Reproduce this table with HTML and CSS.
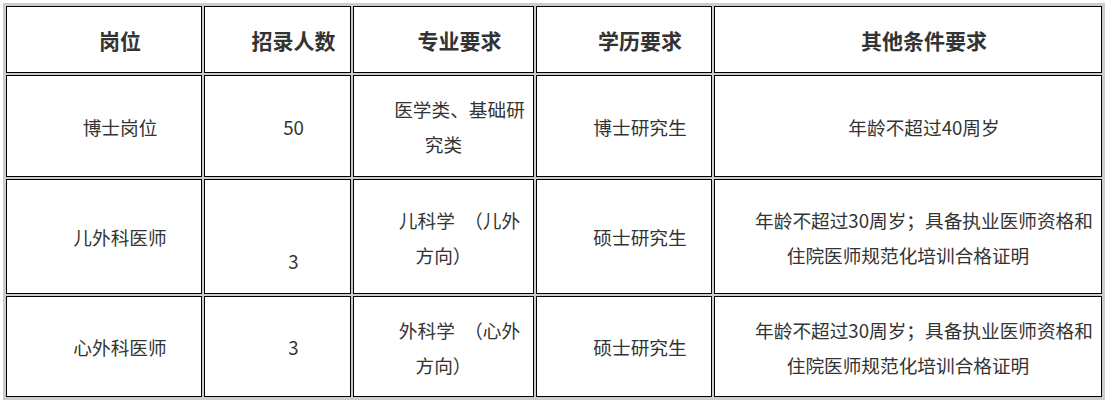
FILE: index.html
```html
<!DOCTYPE html>
<html lang="zh-CN">
<head>
<meta charset="utf-8">
<title>招聘岗位</title>
<link rel="stylesheet" href="styles.css">
</head>
<body>
<table class="jobs">
  <colgroup>
    <col class="c1"><col class="c2"><col class="c3"><col class="c4"><col class="c5">
  </colgroup>
  <tr class="r-head">
    <th>岗位</th>
    <th>招录人数</th>
    <th>专业要求</th>
    <th>学历要求</th>
    <th>其他条件要求</th>
  </tr>
  <tr class="r-1">
    <td>博士岗位</td>
    <td>50</td>
    <td>医学类、基础研<br>究类</td>
    <td>博士研究生</td>
    <td>年龄不超过40周岁</td>
  </tr>
  <tr class="r-2">
    <td>儿外科医师</td>
    <td><div class="low">3</div></td>
    <td>儿科学　（儿外<br>方向）</td>
    <td>硕士研究生</td>
    <td>年龄不超过30周岁；具备执业医师资格和<br>住院医师规范化培训合格证明</td>
  </tr>
  <tr class="r-3">
    <td>心外科医师</td>
    <td>3</td>
    <td>外科学　（心外<br>方向）</td>
    <td>硕士研究生</td>
    <td>年龄不超过30周岁；具备执业医师资格和<br>住院医师规范化培训合格证明</td>
  </tr>
</table>
</body>
</html>
```

FILE: styles.css
```css
html, body {
  background: #ffffff;
}
body {
  margin: 3px;
  font-family: "Noto Sans CJK SC", "Microsoft YaHei", sans-serif;
  color: #333333;
}
.jobs {
  table-layout: fixed;
  width: 1102px;
  border-collapse: separate;
  border-spacing: 2px;
  border: 1px solid #cccccc;
  background: #cccccc;
}
.c1 { width: 196px; }
.c2 { width: 147px; }
.c3 { width: 181px; }
.c4 { width: 176px; }
.c5 { width: 388px; }
.jobs th,
.jobs td {
  box-sizing: border-box;
  background: #ffffff;
  border: 1px solid #000000;
  padding: 0 2px;
  text-align: center;
  text-indent: 32px;
  vertical-align: middle;
}
.jobs th {
  font-size: 21px;
  font-weight: bold;
  line-height: 30px;
}
.jobs td {
  font-size: 18.67px;
  line-height: 35px;
}
.r-head { height: 67px; }
.r-1 { height: 102px; }
.r-2 { height: 115px; }
.r-3 { height: 101px; }
.low {
  padding-top: 48px;
}
```
